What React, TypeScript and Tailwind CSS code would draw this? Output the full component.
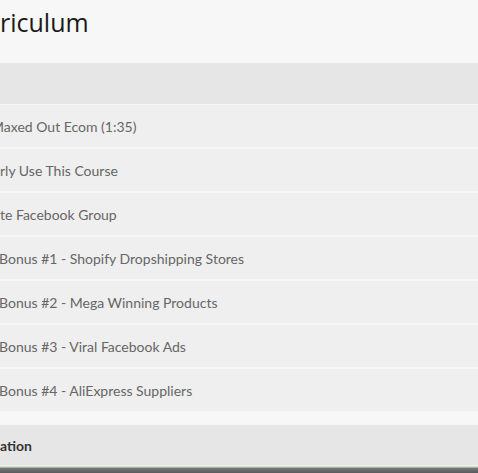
const lessons = [
  { title: 'Maxed Out Ecom (1:35)', shift: '-ml-[9px]' },
  { title: 'rly Use This Course', shift: 'ml-0' },
  { title: 'te Facebook Group', shift: 'ml-0' },
  { title: 'Bonus #1 - Shopify Dropshipping Stores', shift: '-ml-[1px]' },
  { title: 'Bonus #2 - Mega Winning Products', shift: '-ml-[1px]' },
  { title: 'Bonus #3 - Viral Facebook Ads', shift: '-ml-[1px]' },
  { title: 'Bonus #4 - AliExpress Suppliers', shift: '-ml-[1px]' },
];

export default function App() {
  return (
    <div className="w-[478px] h-[473px] overflow-hidden bg-[#f7f7f7] font-['Lato',sans-serif] flex flex-col">
      <div className="h-[63px] shrink-0 pt-[6px]">
        <h2 className="font-['Open_Sans',sans-serif] text-[25px] leading-[32px] text-[#1a1a1a]">riculum</h2>
      </div>

      <div className="h-[41px] shrink-0 bg-[#e6e6e6]" />

      <div className="flex flex-col gap-[2px] pt-[1px]">
        {lessons.map((lesson) => (
          <div key={lesson.title} className="h-[42px] bg-[#efefef] flex items-center overflow-hidden pt-[1px]">
            <span className={`${lesson.shift} text-[14px] text-[#666] whitespace-nowrap`}>{lesson.title}</span>
          </div>
        ))}
      </div>

      <div className="h-[14px] shrink-0" />

      <div className="h-[40px] shrink-0 bg-[#e6e6e6] flex items-center">
        <span className="text-[14px] font-bold text-[#333]">ation</span>
      </div>

      <div className="h-[1px] bg-[#eef4ea]" />
      <div className="h-[1px] bg-[#d3e2cb]" />
      <div className="h-[1px] bg-[#aab5a6]" />
      <div className="flex-1 bg-gradient-to-b from-[#7a7a7a] to-[#5a5a5a]" />
    </div>
  );
}
